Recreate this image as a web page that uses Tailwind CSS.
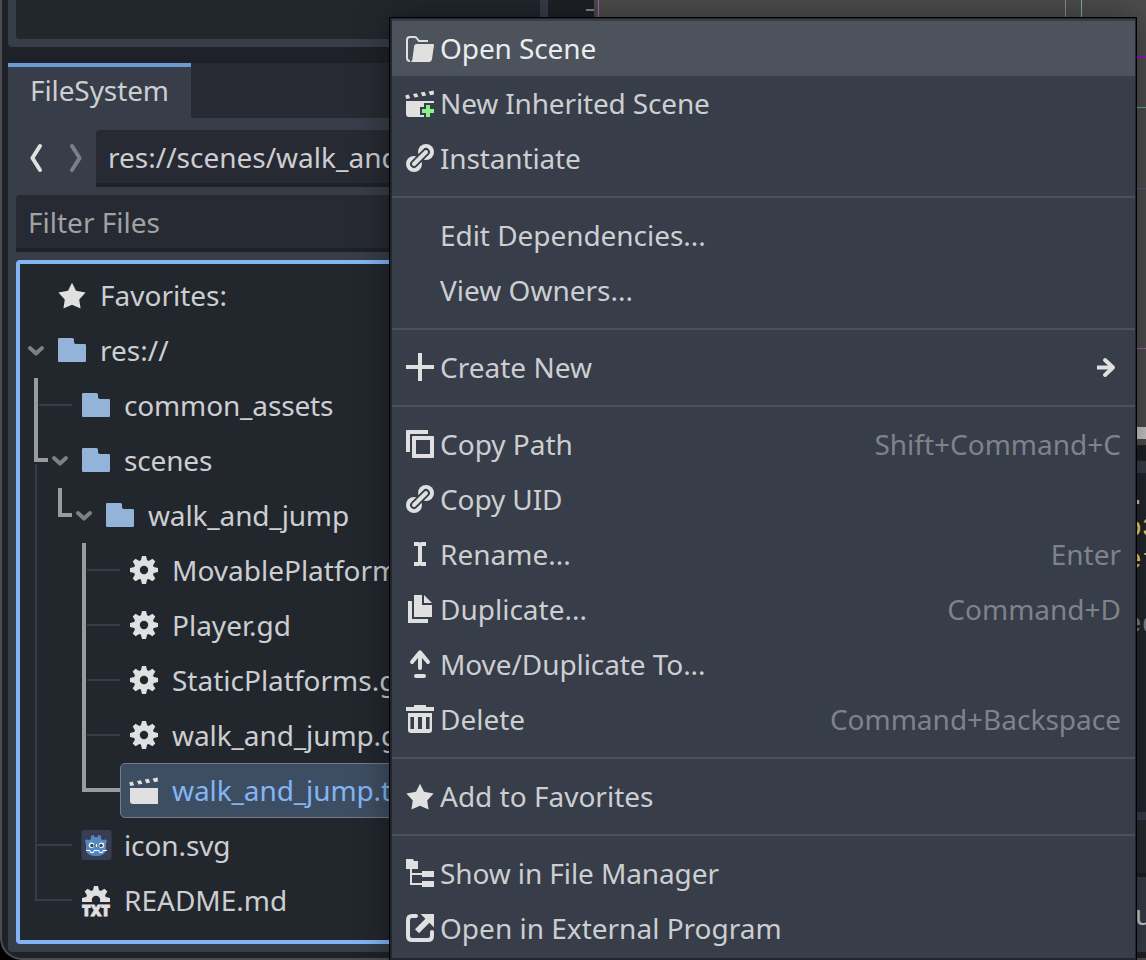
<!DOCTYPE html>
<html lang="en">
<head>
<meta charset="utf-8">
<title>FileSystem</title>
<script src="https://cdn.jsdelivr.net/npm/@tailwindcss/browser@4"></script>
</head>
<body class="bg-black">
<svg class="absolute size-0">
  <symbol id="star" viewBox="0 0 16 16"><path d="M8 1.9 6 5.9 1.2 6.8 4.4 10.2 3.7 14.8 8 12.9l4.3 1.9-.7-4.6 3.2-3.4L10 5.9z"/></symbol>
  <symbol id="folder" viewBox="0 0 16 16"><path d="M1.6 2H8.2q.8 0 .8.8V4q0 1 1 1h4.400q.6 0 .6.6v7.800q0 .6-.6.6H1.6q-.6 0-.6-.6V2.600Q1 2 1.600 2z"/></symbol>
  <symbol id="gear" viewBox="0 0 16 16">
    <circle cx="8" cy="8" r="3.600" fill="none" stroke="#e0e0e0" stroke-width="3"/>
    <path id="t" d="M7 1h2l.8 3.200H6.200z"/><use href="#t" transform="rotate(45 8 8)"/><use href="#t" transform="rotate(90 8 8)"/><use href="#t" transform="rotate(135 8 8)"/><use href="#t" transform="rotate(180 8 8)"/><use href="#t" transform="rotate(225 8 8)"/><use href="#t" transform="rotate(270 8 8)"/><use href="#t" transform="rotate(315 8 8)"/>
  </symbol>
  <symbol id="clap" viewBox="0 0 16 16"><path d="M.6 4.200l1.700-.4.8 1.800-2 .4zM4.500 3.500l1.900-.4.8 1.800-1.900.4zM8.400 2.800l1.900-.4.8 1.800-1.900.4zM12.300 2.200l2.500-.5.2 2-1.900.4z"/></symbol>
  <mask id="lm" maskUnits="userSpaceOnUse" x="0" y="0" width="16" height="16"><path d="M0 0h16v16H0z" fill="#fff"/><path d="M5 11l6-6" stroke="#000" stroke-width="3.900" stroke-linecap="round"/></mask>
  <symbol id="link" viewBox="0 0 16 16">
    <g mask="url(#lm)"><circle cx="11" cy="5" r="4"/><circle cx="5" cy="11" r="4"/></g>
    <path d="M5 11l6-6" stroke="#e0e0e0" stroke-width="2" stroke-linecap="round"/>
  </symbol>
  <symbol id="chev" viewBox="0 0 24 24"><path d="M6 9l6 5.500L18 9" fill="none" stroke="#7d8084" stroke-width="4" stroke-linecap="round" stroke-linejoin="round"/></symbol>
</svg>

<div class="relative h-[960px] w-[1146px] overflow-hidden font-['Noto_Sans',sans-serif] text-[28px] text-[#cdced1]">
  <!-- editor window -->
  <div class="flex h-[960px] w-[1200px] rounded-bl-[22px] border-b-2 border-l-2 border-[#4a4c4f] bg-[#1e2127] pl-1.5">
    <div class="flex w-[540px] shrink-0 flex-col">
      <div class="h-[47px] rounded-b-[4px] bg-[#373d49] px-2 pb-2"><div class="h-[39px] rounded-b-[4px] bg-[#22272e]"></div></div>
      <div class="mt-4 flex h-[55px] bg-[#272a32]">
        <div class="w-[183px] border-t-4 border-[#6a9bd1] bg-[#373d49] pl-[22px] leading-[46px] tracking-[-0.1px]">FileSystem</div>
      </div>
      <div class="flex h-[834px] flex-col rounded-b-[4px] bg-[#373d49] px-2 pb-2 pt-3">
        <div class="flex h-[57px]">
          <svg class="h-[57px] w-20" viewBox="16 130 80 57" fill="none" stroke-width="4" stroke-linecap="round" stroke-linejoin="round"><path d="M40 146l-7.600 12 7.600 12" stroke="#e0e0e0"/><path d="M72 146l7.600 12-7.600 12" stroke="#7b7f86"/></svg>
          <div class="flex-1 overflow-hidden whitespace-nowrap rounded-t-[4px] border-b-4 border-[#1e2127] bg-[#272a32] pl-3 leading-[54px]">res://scenes/walk_and_jump</div>
        </div>
        <div class="mt-2 h-[57px] rounded-t-[4px] border-b-4 border-[#1e2127] bg-[#272a32] pl-3 leading-[54px] text-[#a0a2a5]">Filter Files</div>
        <div class="relative mt-2 h-[684px] rounded-[4px] border-4 border-[#83b5f4] bg-[#22272e] pt-1 leading-[54px]">
          <!-- relationship lines -->
          <svg class="absolute left-0 top-0 h-[676px] w-[200px]" viewBox="20 264 200 676" fill="none">
            <path d="M39 405H72M36 464V900H72M36 845H72M87 570H120M87 625H120M87 680H120M87 735H120" stroke="#383c44" stroke-width="2"/>
            <path d="M36 378V460H48M60 488V515H72M84 543V790H120" stroke="#999b9e" stroke-width="4"/>
          </svg>
          <div class="flex h-[55px] pl-9"><svg class="mr-3 mt-[11px] size-8 fill-[#e0e0e0]"><use href="#star"/></svg>Favorites:</div>
          <div class="flex h-[55px] pl-1"><svg class="mr-2 mt-4 size-6"><use href="#chev"/></svg><svg class="mr-3 mt-[11px] size-8 fill-[#93b3d8]"><use href="#folder"/></svg>res://</div>
          <div class="flex h-[55px] pl-[60px] tracking-[-0.15px]"><svg class="mr-3 mt-[11px] size-8 fill-[#93b3d8]"><use href="#folder"/></svg>common_assets</div>
          <div class="flex h-[55px] pl-7 tracking-[-0.15px]"><svg class="mr-2 mt-4 size-6"><use href="#chev"/></svg><svg class="mr-3 mt-[11px] size-8 fill-[#93b3d8]"><use href="#folder"/></svg>scenes</div>
          <div class="flex h-[55px] pl-[52px] tracking-[-0.15px]"><svg class="mr-2 mt-4 size-6"><use href="#chev"/></svg><svg class="mr-3 mt-[11px] size-8 fill-[#93b3d8]"><use href="#folder"/></svg>walk_and_jump</div>
          <div class="flex h-[55px] pl-[108px]"><svg class="mr-3 mt-[11px] size-8 fill-[#e0e0e0]"><use href="#gear"/></svg>MovablePlatforms.gd</div>
          <div class="flex h-[55px] pl-[108px]"><svg class="mr-3 mt-[11px] size-8 fill-[#e0e0e0]"><use href="#gear"/></svg>Player.gd</div>
          <div class="flex h-[55px] pl-[108px]"><svg class="mr-3 mt-[11px] size-8 fill-[#e0e0e0]"><use href="#gear"/></svg>StaticPlatforms.gd</div>
          <div class="flex h-[55px] pl-[108px] tracking-[-0.1px]"><svg class="mr-3 mt-[11px] size-8 fill-[#e0e0e0]"><use href="#gear"/></svg>walk_and_jump.gd</div>
          <div class="ml-[100px] flex h-[55px] rounded-[5px] border border-[#747b86] bg-[#3e4e62] pl-[7px] leading-[52px] tracking-[-0.1px] text-[#83b5f4]"><svg class="mr-3 mt-2.5 size-8 fill-[#e0e0e0]" viewBox="0 0 16 16"><use href="#clap"/><path d="M1 7h14v8H2.500Q1 15 1 13.500z"/></svg>walk_and_jump.tscn</div>
          <div class="flex h-[55px] pl-[60px] tracking-[-0.1px]"><svg class="mr-3 mt-[11px] size-8" viewBox="0 0 32 32">
            <rect x="1.500" y="1" width="30" height="30" rx="2.500" fill="#383d52"/>
            <path d="M5 12q1-2 2-1.500l2 .5 2-1V7q1.500-1 3-1v2h4V6q2 0 3 1v3l2 1 2-.5q1-.5 2 1.500l-1 3v6q-1 6-10 6T6 21v-6z" fill="#5289c0"/>
            <circle cx="11.500" cy="16.300" r="2.700" fill="#fff"/><circle cx="21.500" cy="16.300" r="2.700" fill="#fff"/><circle cx="11.900" cy="16.500" r="1.800" fill="#40474f"/><circle cx="21.100" cy="16.500" r="1.800" fill="#40474f"/>
            <path d="M16.500 15v3M6 21.500h4l.5 2h3l.5-2h5l.5 2h3l.5-2h4" fill="none" stroke="#fff" stroke-width="1"/></svg>icon.svg</div>
          <div class="flex h-[55px] pl-[60px]"><svg class="mr-3 mt-[11px] size-8 overflow-visible fill-[#e0e0e0]" viewBox="0 0 16 16"><clipPath id="c"><path d="M0 0h16v9H0z"/></clipPath><g clip-path="url(#c)"><use href="#gear"/></g><text x="1" y="15.900" textLength="14" lengthAdjust="spacingAndGlyphs" stroke="#e0e0e0" stroke-width="0.450" class="text-[8px] font-black tracking-normal">TXT</text></svg>README.md</div>
        </div>
      </div>
    </div>
    <!-- 2D viewport and script area -->
    <div class="relative flex flex-1 flex-col">
      <div class="ml-[46px] h-[445px] bg-[#4d4d4d]"></div>
      <div class="mt-4 h-3 bg-[#373d49]"></div>
      <div class="h-[339px] bg-[#22272e]"></div>
      <div class="h-2 bg-[#373d49]"></div>
      <div class="h-[53px] bg-[#272b31]"></div>
      <div class="h-1 bg-[#1e2127]"></div>
      <div class="h-[75px] bg-[#373d49]"></div>
      <svg class="absolute left-0 top-0 h-[445px] w-[598px]" viewBox="548 0 598 445" fill="none" shape-rendering="crispEdges">
        <path d="M586 10h8" stroke="#85878a" stroke-width="2"/><path d="M598.500 0v20" stroke="#b75fc0"/>
        <path d="M1065.500 0v20" stroke="#7d9d80"/><path d="M1081.500 0v20" stroke="#6cbcbd"/>
        <path d="M1136 57h10" stroke="#8c18c0" stroke-width="2"/><path d="M1136 107.500h10" stroke="#63aaa5"/>
        <path d="M1136 188.500h10" stroke="#57509f"/><path d="M1136 348.500h10" stroke="#b053b5"/>
        <path d="M1136 433h10" stroke="#c8c8c8" stroke-width="12"/>
      </svg>
      <div class="absolute left-[577px] top-[481px] whitespace-pre font-['Liberation_Mono',monospace] text-[28px] leading-[32px]"><div class="pl-1">.</div><div class="text-[#f5d96a]">o3</div><div class="text-[#f5d96a]">et</div><div class="text-[#85878b]"> -</div><div class="text-[#85878b]">ed</div></div>
      <div class="absolute left-[587px] top-[887px] leading-[55px]">up</div>
    </div>
  </div>

  <!-- context menu -->
  <div class="absolute left-[389px] top-[17px] h-[950px] w-[748px] border border-black bg-[#22262d] pl-0.5 pr-px pt-px shadow-[0_0_34px_rgba(0,0,0,0.4)]">
    <div class="h-[939px] bg-[#373d49] pt-0.5 leading-[54px]">
      <div class="flex h-[55px] bg-[#4c535c] pl-3 tracking-[-0.1px] text-[#ebecee]"><svg class="mr-1 mt-[11px] size-8" viewBox="0 0 16 16"><path d="M12 4.500H7.500L6.300 3Q5.900 2.500 5.300 2.500H3Q1.500 2.500 1.500 4v9q0 1.500 1.500 1.500" fill="none" stroke="#e0e0e0"/><path d="M6.200 6H14.500q.6 0 .5.600L14 13.500Q13.700 15 12.500 15H3q1 0 1.200-1.500L5.100 7Q5.200 6 6.200 6z" fill="#e0e0e0"/></svg>Open Scene</div>
      <div class="flex h-[55px] pl-3 tracking-[-0.15px]"><svg class="mr-1 mt-[11px] size-8 fill-[#e0e0e0]" viewBox="0 0 16 16"><use href="#clap"/><path d="M1 7H15V8H10V10H8V14H10V15H2.500Q1 15 1 13.500z"/><path d="M11 9h2v2h2v2h-2v2h-2v-2H9v-2h2z" fill="#8bf18b"/></svg>New Inherited Scene</div>
      <div class="flex h-[55px] pl-3 tracking-[-0.15px]"><svg class="mr-1 mt-[11px] size-8 fill-[#e0e0e0]"><use href="#link"/></svg>Instantiate</div>
      <div class="my-2.5 h-0.5 bg-[#4a515c]"></div>
      <div class="h-[55px] pl-12 tracking-[-0.05px]">Edit Dependencies...</div>
      <div class="h-[55px] pl-12">View Owners...</div>
      <div class="my-2.5 h-0.5 bg-[#4a515c]"></div>
      <div class="flex h-[55px] pl-3"><svg class="mr-1 mt-[11px] size-8 fill-[#e0e0e0]" viewBox="0 0 16 16"><path d="M7 1h2v6h6v2H9v6H7V9H1V7h6z"/></svg>Create New<svg class="ml-auto mr-[19px] mt-4 h-6 w-5" viewBox="0 0 20 24" fill="none" stroke="#e0e0e0" stroke-width="4" stroke-linejoin="round"><path d="M1 11.500H16"/><path d="M9 4l8 7.500L9 19" stroke-linecap="round"/></svg></div>
      <div class="my-2.5 h-0.5 bg-[#4a515c]"></div>
      <div class="flex h-[55px] pl-3"><svg class="mr-1 mt-[11px] size-8 fill-[#e0e0e0]" viewBox="0 0 16 16"><path d="M1.500 1H12V3H3v9H1V1.500Q1 1 1.500 1z"/><path fill-rule="evenodd" d="M4.500 4h10q.5 0 .5.500v10q0 .5-.5.500h-10q-.5 0-.5-.5v-10Q4 4 4.500 4zM6 6v7h7V6z"/></svg>Copy Path<span class="ml-auto mr-[14px] text-[#7f8389]">Shift+Command+C</span></div>
      <div class="flex h-[55px] pl-3 tracking-[-0.1px]"><svg class="mr-1 mt-[11px] size-8 fill-[#e0e0e0]"><use href="#link"/></svg>Copy UID</div>
      <div class="flex h-[55px] pl-3"><svg class="mr-1 mt-[11px] size-8 fill-[#e0e0e0]" viewBox="0 0 16 16"><path d="M5 2h2.500l.5.400.5-.4H11v2H9v8h2v2H8.500L8 13.600l-.5.400H5v-2h2V4H5z"/></svg>Rename...<span class="ml-auto mr-[14px] text-[#7f8389]">Enter</span></div>
      <div class="flex h-[55px] pl-3"><svg class="mr-1 mt-[11px] size-8 fill-[#e0e0e0]" viewBox="0 0 16 16"><path d="M5 1h4v5h5v6H5zM10 1l4 4h-4zM2 4h2v9h8v2H2z"/></svg>Duplicate...<span class="ml-auto mr-[14px] text-[#7f8389]">Command+D</span></div>
      <div class="flex h-[55px] pl-3 tracking-[-0.08px]"><svg class="mr-1 mt-[11px] size-8" viewBox="0 0 16 16" fill="none" stroke="#e0e0e0" stroke-width="2" stroke-linecap="round" stroke-linejoin="round"><path d="M8 10V2.200M4 7l4-4.800L12 7M6 14h4"/></svg>Move/Duplicate To...</div>
      <div class="flex h-[55px] pl-3"><svg class="mr-1 mt-[11px] size-8 fill-[#e0e0e0]" viewBox="0 0 16 16"><path d="M5 1h6v1h4v2H1V2h4z"/><path fill-rule="evenodd" d="M2 5h12v8.500q0 1.500-1.500 1.500h-9Q2 15 2 13.500zM3.200 7v6H5V7zM7 7v6h2V7zM11 7v6h1.800V7z"/></svg>Delete<span class="ml-auto mr-[14px] text-[#7f8389]">Command+Backspace</span></div>
      <div class="my-2.5 h-0.5 bg-[#4a515c]"></div>
      <div class="flex h-[55px] pl-3"><svg class="mr-1 mt-[11px] size-8 fill-[#e0e0e0]"><use href="#star"/></svg>Add to Favorites</div>
      <div class="my-2.5 h-0.5 bg-[#4a515c]"></div>
      <div class="flex h-[55px] pl-3 tracking-[-0.1px]"><svg class="mr-1 mt-[11px] size-8 fill-[#e0e0e0]" viewBox="0 0 16 16"><path d="M1 1h3.500l.5 1h2v4H4v2h5V7h6v3H9V9H4v4h5v-1h6v3H9v-1H3V6H1z"/></svg>Show in File Manager</div>
      <div class="flex h-[55px] pl-3"><svg class="mr-1 mt-[11px] size-8 fill-[#e0e0e0]" viewBox="0 0 16 16"><path d="M6 2H4Q2 2 2 4v8q0 2 2 2h8q2 0 2-2v-2" fill="none" stroke="#e0e0e0" stroke-width="2" stroke-linecap="round"/><path d="M8.300 1H15v6.700l-2.300-2.300-5.200 5.200-2-2 5.200-5.200z"/></svg>Open in External Program</div>
    </div>
  </div>
</div>
</body>
</html>
